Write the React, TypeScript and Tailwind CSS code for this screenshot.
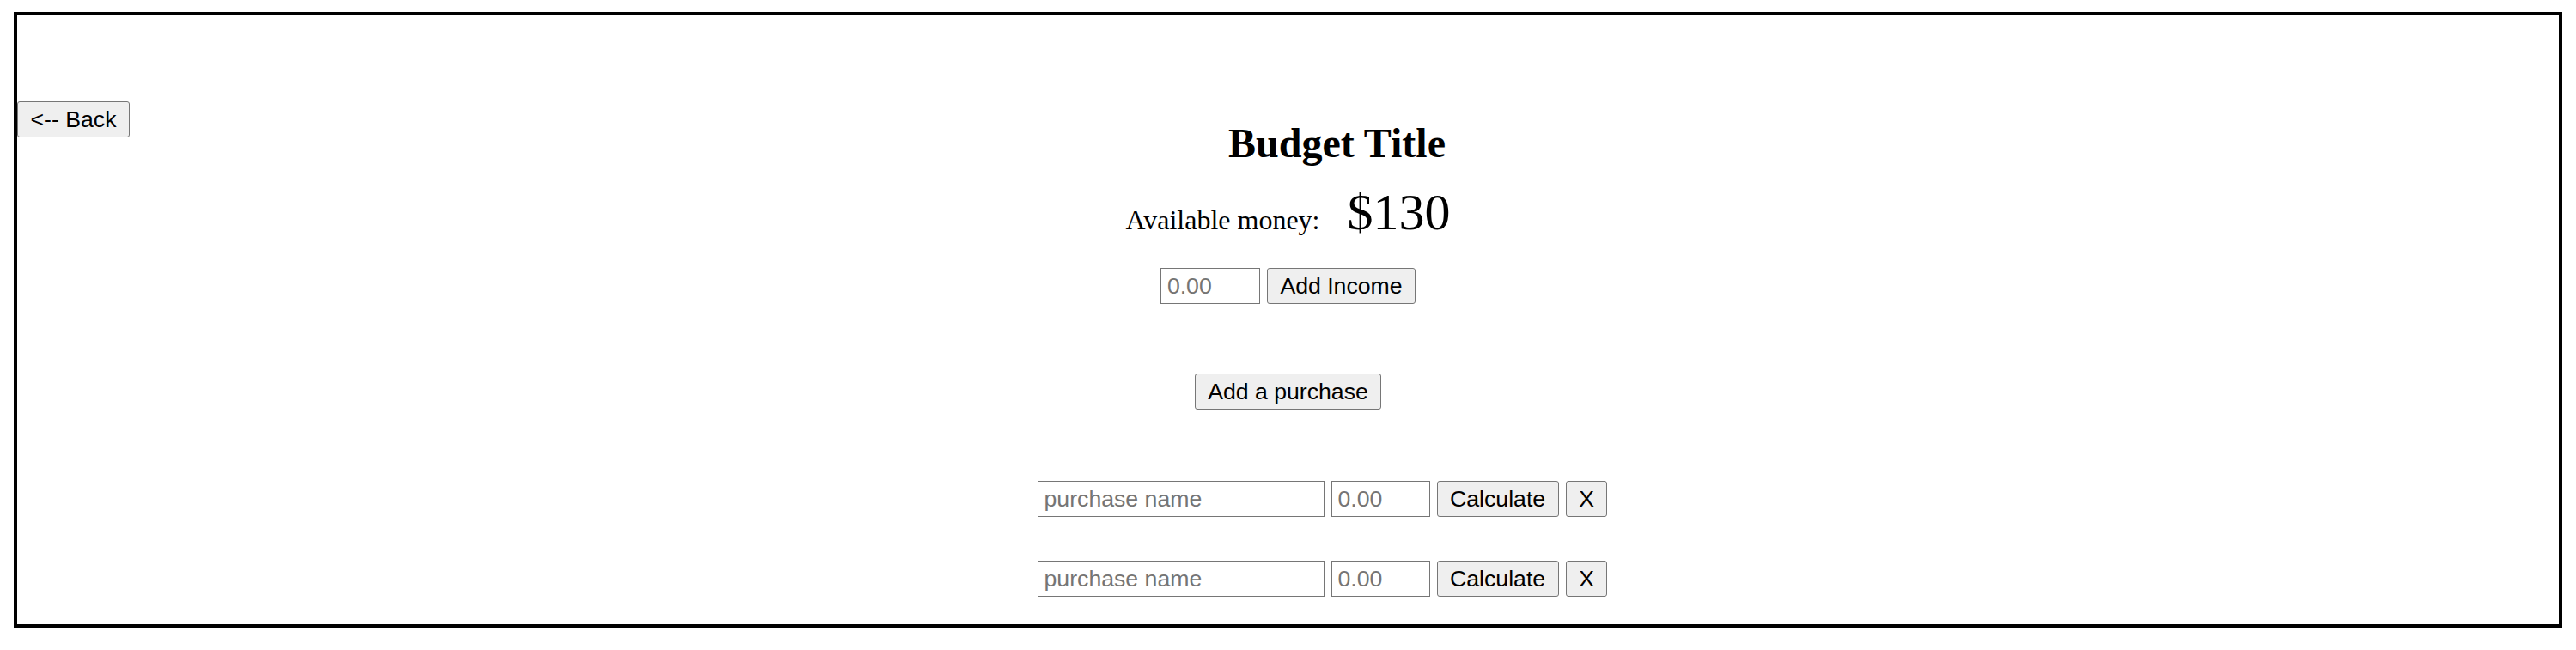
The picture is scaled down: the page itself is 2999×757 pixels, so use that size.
const btn =
  "h-[42px] shrink-0 rounded-[3px] border border-[#767676] bg-[#efefef] px-[14.5px] font-['Liberation_Sans',Arial,sans-serif] text-[26.67px] leading-none text-black";
const field =
  "h-[42px] shrink-0 border border-[#767676] bg-white pl-[7px] font-['Liberation_Sans',Arial,sans-serif] text-[26.67px] text-black placeholder:text-[#757575] outline-none";

const purchases = [1, 2];

export default function App() {
  return (
    <div className="min-h-[757px] bg-white pt-[14px] pb-[26px]">
      <div className="mx-[16px] border-4 border-black pt-[100px] pb-[32px] font-['Liberation_Serif','Times_New_Roman',serif] text-black">
        <div className="flex items-start">
          <button type="button" className={btn}>
            {"<-- Back"}
          </button>
          <h2 className="mt-[21px] flex-1 pr-[17px] text-center text-[48px] font-bold leading-[56px]">
            Budget Title
          </h2>
        </div>

        <div className="mt-[22px] flex items-baseline justify-center gap-[32px]">
          <span className="text-[32px] leading-none">Available money:</span>
          <span className="text-[60px] leading-none">$130</span>
        </div>

        <div className="mt-[35px] flex justify-center gap-2">
          <input type="number" placeholder="0.00" className={`${field} w-[116px]`} />
          <button type="button" className={btn}>
            Add Income
          </button>
        </div>

        <div className="mt-[81px] flex justify-center">
          <button type="button" className={btn}>
            Add a purchase
          </button>
        </div>

        <div className="mt-[83px] flex flex-col gap-[51px]">
          {purchases.map((p) => (
            <div key={p} className="flex justify-center gap-2 pl-[80px]">
              <input type="text" placeholder="purchase name" className={`${field} w-[334px]`} />
              <input type="number" placeholder="0.00" className={`${field} w-[115px]`} />
              <button type="button" className={btn}>
                Calculate
              </button>
              <button type="button" className={btn}>
                X
              </button>
            </div>
          ))}
        </div>
      </div>
    </div>
  );
}
